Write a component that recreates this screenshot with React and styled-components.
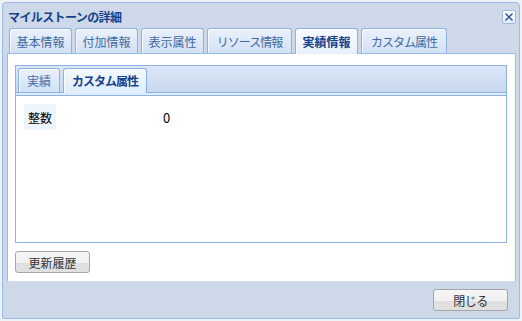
import React from "react";
import styled, { createGlobalStyle } from "styled-components";

const Global = createGlobalStyle`
  html, body { margin: 0; padding: 0; }
  body {
    background: #eef1f5;
    font-family: "Noto Sans CJK JP", "Noto Sans", sans-serif;
    width: 522px; height: 321px; overflow: hidden;
  }
`;

const Window = styled.div`
  box-sizing: border-box;
  margin: 2px 0 0 2px;
  width: 518px;
  height: 317px;
  border: 1px solid #99bbe8;
  border-radius: 4px 4px 2px 2px;
  background: #cdd9e8;
  padding: 0 3px 0 4px;
  display: flex;
  flex-direction: column;
`;

const Header = styled.div`
  height: 25px;
  display: flex;
  align-items: center;
  justify-content: space-between;
  padding: 0 0 0 1px;
`;

const Title = styled.div`
  font-size: 12px;
  font-weight: bold;
  color: #15428b;
  letter-spacing: -0.6px;
  line-height: 14px;
  margin-top: 2px;
`;

const CloseBox = styled.div`
  box-sizing: border-box;
  width: 14px;
  height: 14px;
  margin-top: 3px;
  border: 1px solid #99bbe8;
  border-radius: 2px;
  background: linear-gradient(#ffffff, #e4edf9);
  display: flex;
  align-items: center;
  justify-content: center;
`;

const Strip = styled.div`
  display: flex;
  gap: 3px;
  align-items: flex-end;
  padding: ${(p) => (p.inner ? "2px 0 0 2px" : "0 0 0 2px")};
  border-bottom: 1px solid ${(p) => (p.inner ? "#8db2e3" : "#99bbe8")};
  background: ${(p) =>
    p.inner ? "linear-gradient(#dbe6f6, #c8d8ee)" : "transparent"};
`;

const Tab = styled.div`
  box-sizing: border-box;
  width: ${(p) => p.width}px;
  height: ${(p) => (p.inner ? 24 : 25)}px;
  margin-bottom: ${(p) => (p.active ? "-1px" : "0")};
  height: ${(p) => (p.inner ? 24 : 25) + (p.active ? 1 : 0)}px;
  border: 1px solid #8db2e3;
  border-bottom: none;
  border-radius: 3px 3px 0 0;
  display: flex;
  align-items: center;
  justify-content: center;
  font-size: 12px;
  white-space: nowrap;
  padding-bottom: ${(p) => (p.active ? 1 : 0)}px;
  color: ${(p) => (p.active ? "#15428b" : "#416aa3")};
  font-weight: ${(p) => (p.active ? "bold" : "normal")};
  letter-spacing: ${(p) => (p.kana ? "-1px" : "0")};
  background: ${(p) =>
    p.active
      ? p.inner
        ? "linear-gradient(#f5f9fe, #deecfd)"
        : "linear-gradient(#f8fbff, #e6f0fc)"
      : "linear-gradient(#eaf1fb, #d2e1f5)"};
  box-shadow: inset 1px 1px 0 rgba(255, 255, 255, 0.7);
`;

const Body = styled.div`
  flex: 1;
  box-sizing: border-box;
  background: #ffffff;
  border: 1px solid #99bbe8;
  border-top: none;
  border-bottom: none;
  padding: 11px 8px 8px 7px;
  display: flex;
  flex-direction: column;
  align-items: flex-start;
`;

const Panel = styled.div`
  box-sizing: border-box;
  align-self: stretch;
  height: 178px;
  border: 1px solid #8db2e3;
  display: flex;
  flex-direction: column;
`;

const Spacer = styled.div`
  height: 2px;
  background: #deecfd;
  border-bottom: 1px solid #8db2e3;
`;

const Content = styled.div`
  flex: 1;
  padding: 8px 0 0 8px;
`;

const Row = styled.div`
  display: grid;
  grid-template-columns: 139px 1fr;
  align-items: center;
`;

const Label = styled.div`
  justify-self: start;
  width: 32px;
  height: 26px;
  box-sizing: border-box;
  background: #eef4fc;
  font-size: 12px;
  color: #000;
  display: flex;
  align-items: center;
  padding-left: 4px;
  white-space: nowrap;
`;

const Value = styled.div`
  font-size: 13px;
  color: #000;
`;

const Button = styled.button`
  box-sizing: border-box;
  width: 75px;
  height: 22px;
  margin-top: 8px;
  border: 1px solid #a6a6a6;
  border-radius: 3px;
  background: linear-gradient(#f6f6f6 0%, #efefef 55%, #e0e0e0 56%, #e0e0e0 100%);
  font-family: "Noto Sans CJK JP", sans-serif;
  font-size: 12px;
  color: #333;
  padding: 0;
  letter-spacing: ${(p) => (p.kana ? "-0.5px" : "0")};
  display: flex;
  align-items: center;
  justify-content: center;
`;

const Footer = styled.div`
  height: 37px;
  box-sizing: border-box;
  display: flex;
  justify-content: flex-end;
  padding: 0 8px 0 0;
  & > button {
    margin-top: 8px;
  }
`;

const outerTabs = [
  { t: "基本情報", w: 63 },
  { t: "付加情報", w: 63 },
  { t: "表示属性", w: 63 },
  { t: "リソース情報", w: 85, kana: true },
  { t: "実績情報", w: 63, active: true },
  { t: "カスタム属性", w: 86, kana: true },
];

export default function App() {
  return (
    <>
      <Global />
      <Window>
        <Header>
          <Title>マイルストーンの詳細</Title>
          <CloseBox>
            <svg width="10" height="10" viewBox="0 0 10 10">
              <path d="M1.5 1.5 L8.5 8.5 M8.5 1.5 L1.5 8.5" stroke="#2d4f8f" strokeWidth="1.4" />
            </svg>
          </CloseBox>
        </Header>
        <Strip>
          {outerTabs.map((t) => (
            <Tab key={t.t} width={t.w} active={t.active} kana={t.kana}>
              {t.t}
            </Tab>
          ))}
        </Strip>
        <Body>
          <Panel>
            <Strip inner>
              <Tab inner width={42}>実績</Tab>
              <Tab inner width={84} active kana>カスタム属性</Tab>
            </Strip>
            <Spacer />
            <Content>
              <Row>
                <Label>整数</Label>
                <Value>0</Value>
              </Row>
            </Content>
          </Panel>
          <Button>更新履歴</Button>
        </Body>
        <Footer>
          <Button kana>閉じる</Button>
        </Footer>
      </Window>
    </>
  );
}
